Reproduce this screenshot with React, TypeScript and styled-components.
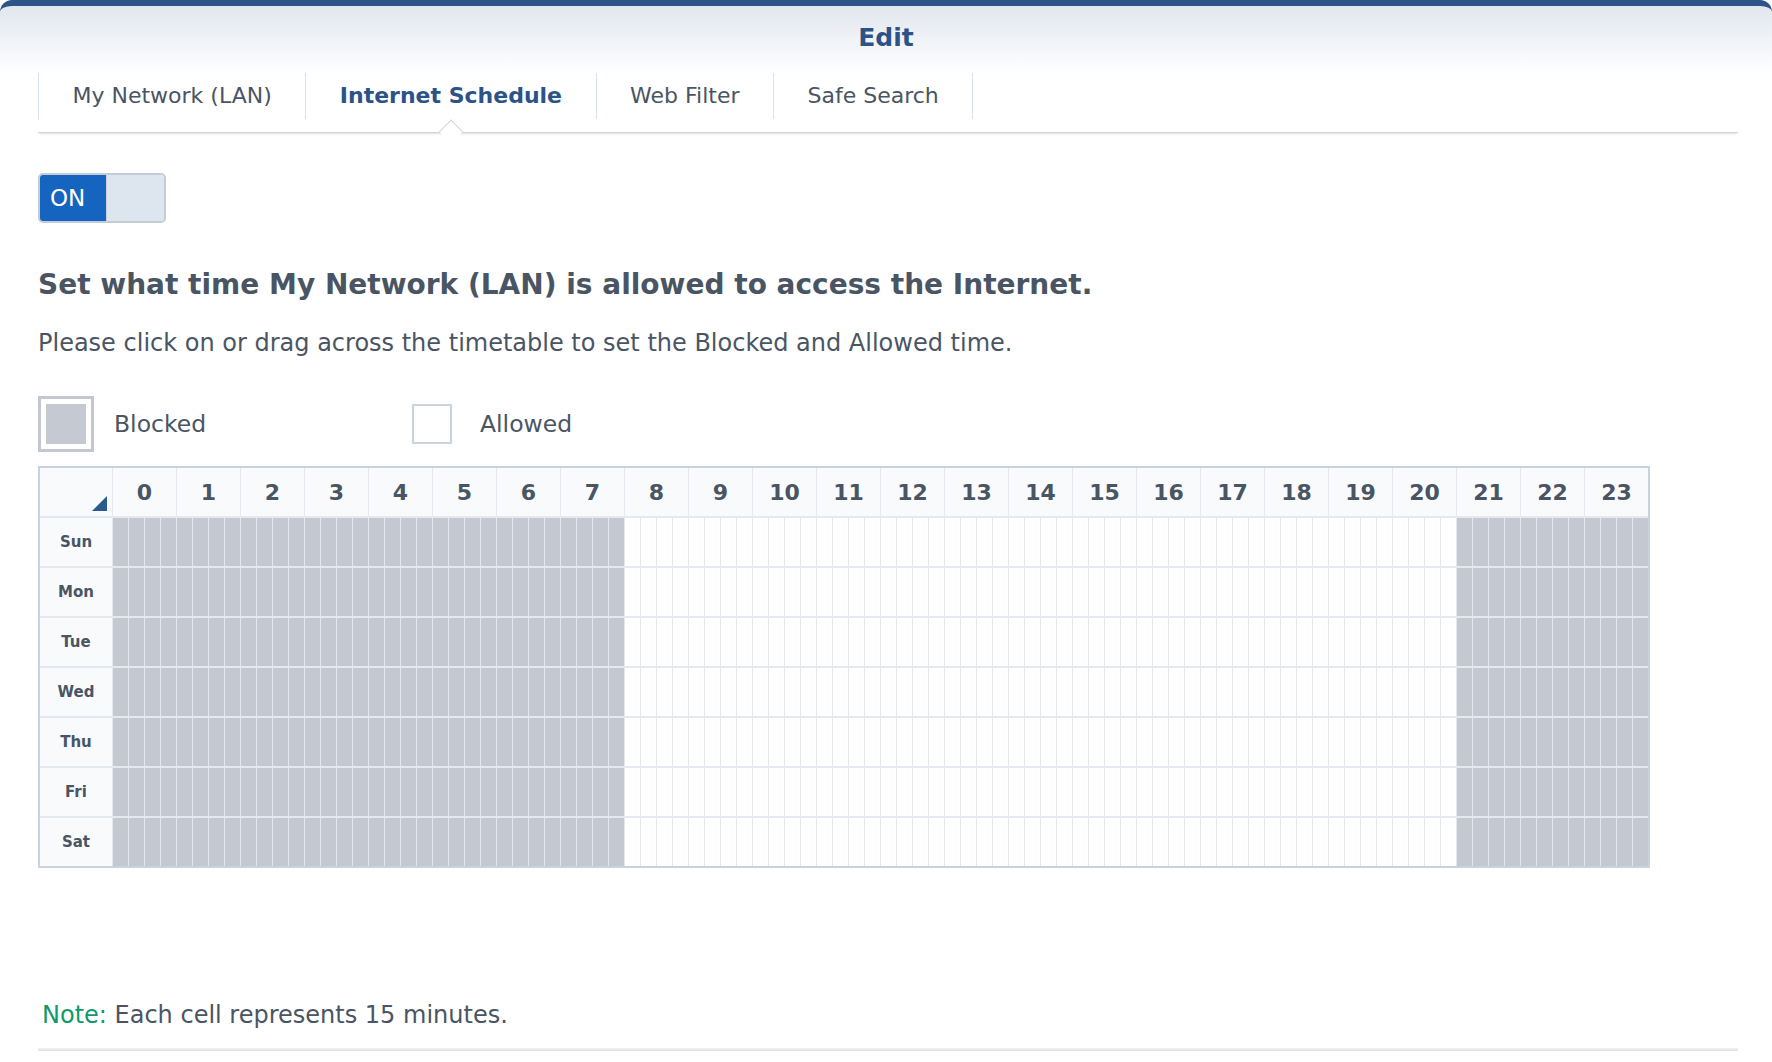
import { FC } from "react";
import styled, { createGlobalStyle } from "styled-components";

const GlobalStyle = createGlobalStyle`
  html, body {
    margin: 0;
    padding: 0;
    background: #ffffff;
  }
  body {
    font-family: "DejaVu Sans", Verdana, sans-serif;
    color: #4a5563;
  }
`;

const Window = styled.div`
  min-height: 1062px;
  box-sizing: border-box;
  border-top: 6px solid #2c5487;
  border-radius: 12px 12px 0 0;
  background: linear-gradient(#e1e7ef 0px, #ffffff 68px);
`;

const Title = styled.div`
  height: 64px;
  line-height: 64px;
  text-align: center;
  font-size: 25px;
  font-weight: 700;
  color: #2b5388;
`;

const TabBar = styled.div`
  margin: 3px 34px 0 38px;
  display: flex;
  padding-bottom: 13px;
  border-bottom: 1px solid #d0d4d9;
  box-shadow: 0 2px 2px -1px rgba(0, 0, 0, 0.12);
`;

const Tab = styled.div<{ $active?: boolean }>`
  position: relative;
  height: 46px;
  line-height: 46px;
  padding: 0 33.5px;
  border-left: 1px solid #d9e1ea;
  font-size: 22px;
  font-weight: ${(p) => (p.$active ? 700 : 400)};
  color: ${(p) => (p.$active ? "#2b5388" : "#4a5563")};
  &:last-child {
    border-right: 1px solid #d9e1ea;
  }
  ${(p) =>
    p.$active &&
    `
    &::after {
      content: "";
      position: absolute;
      left: 50%;
      bottom: -21px;
      width: 16px;
      height: 16px;
      background: #ffffff;
      border-left: 1px solid #d0d4d9;
      border-top: 1px solid #d0d4d9;
      transform: translateX(-50%) rotate(45deg);
    }
  `}
`;

const Content = styled.div`
  margin: 0 34px 0 38px;
`;

const Toggle = styled.div`
  margin-top: 40px;
  display: flex;
  width: 128px;
  height: 50px;
  box-sizing: border-box;
  border: 2px solid #c4ccd6;
  border-radius: 5px;
  overflow: hidden;
`;

const ToggleOn = styled.div`
  width: 66px;
  box-sizing: border-box;
  padding-left: 10px;
  background: #1565c0;
  color: #ffffff;
  font-size: 23px;
  line-height: 46px;
`;

const ToggleKnob = styled.div`
  flex: 1;
  background: #dde5ee;
  border-left: 1px solid #c9d2dc;
`;

const Heading = styled.h2`
  margin: 46px 0 0;
  font-size: 28px;
  line-height: 32px;
  font-weight: 700;
  color: #4a5563;
`;

const Description = styled.p`
  margin: 28px 0 0;
  font-size: 24px;
  line-height: 28px;
`;

const Legend = styled.div`
  margin-top: 39px;
  display: flex;
`;

const LegendItem = styled.div`
  width: 366px;
  display: flex;
  align-items: center;
  gap: 20px;
  font-size: 23.5px;
`;

const SwatchSlot = styled.div`
  width: 56px;
  height: 56px;
  display: flex;
  align-items: center;
  justify-content: center;
`;

const BlockedSwatch = styled.div`
  width: 56px;
  height: 56px;
  box-sizing: border-box;
  border: 3px solid #c3c8d0;
  background: #c4c9d2;
  box-shadow: inset 0 0 0 5px #ffffff;
`;

const AllowedSwatch = styled.div`
  width: 40px;
  height: 40px;
  box-sizing: border-box;
  border: 2px solid #cbd4de;
  background: #ffffff;
`;

const Schedule = styled.div`
  margin-top: 14px;
  width: 1612px;
  box-sizing: border-box;
  border: 2px solid #c9d3dd;
  display: grid;
  grid-template-columns: 72px repeat(96, 15px);
  grid-auto-rows: 48px;
  column-gap: 1px;
  row-gap: 2px;
  background: #e4e9f0;
`;

const Corner = styled.div`
  background: #f8fafc;
  display: flex;
  align-items: flex-end;
  justify-content: flex-end;
  padding: 0 5px 5px 0;
`;

const CornerMark = styled.div`
  width: 0;
  height: 0;
  border-left: 15px solid transparent;
  border-bottom: 15px solid #2b5a8f;
`;

const HourHead = styled.div`
  grid-column: span 4;
  background: #f8fafc;
  display: flex;
  align-items: center;
  justify-content: center;
  font-size: 22px;
  font-weight: 700;
`;

const DayLabel = styled.div`
  background: #f8fafc;
  display: flex;
  align-items: center;
  justify-content: center;
  font-size: 15px;
  font-weight: 700;
`;

const Cell = styled.div<{ $blocked: boolean }>`
  background: ${(p) => (p.$blocked ? "#c4c8d1" : "#ffffff")};
`;

const Note = styled.div`
  margin-top: 133px;
  font-size: 24px;
  line-height: 28px;
  padding-left: 4px;
`;

const NoteLabel = styled.span`
  color: #0e9a6a;
`;

const Rule = styled.div`
  margin-top: 19px;
  height: 3px;
  background: linear-gradient(#f4f4f4, #dfdfdf);
`;

const days = ["Sun", "Mon", "Tue", "Wed", "Thu", "Fri", "Sat"];
const hours = Array.from({ length: 24 }, (_, i) => i);
const quarters = Array.from({ length: 96 }, (_, i) => i);

const isBlocked = (q: number) => {
  const hour = Math.floor(q / 4);
  return hour < 8 || hour >= 21;
};

const App: FC = () => {
  return (
    <>
      <GlobalStyle />
      <Window>
        <Title>Edit</Title>
        <TabBar>
          <Tab>My Network (LAN)</Tab>
          <Tab $active>Internet Schedule</Tab>
          <Tab>Web Filter</Tab>
          <Tab>Safe Search</Tab>
        </TabBar>
        <Content>
          <Toggle>
            <ToggleOn>ON</ToggleOn>
            <ToggleKnob />
          </Toggle>
          <Heading>
            Set what time My Network (LAN) is allowed to access the Internet.
          </Heading>
          <Description>
            Please click on or drag across the timetable to set the Blocked and
            Allowed time.
          </Description>
          <Legend>
            <LegendItem>
              <SwatchSlot>
                <BlockedSwatch />
              </SwatchSlot>
              Blocked
            </LegendItem>
            <LegendItem>
              <SwatchSlot>
                <AllowedSwatch />
              </SwatchSlot>
              Allowed
            </LegendItem>
          </Legend>
          <Schedule>
            <Corner>
              <CornerMark />
            </Corner>
            {hours.map((h) => (
              <HourHead key={h}>{h}</HourHead>
            ))}
            {days.map((day) => [
              <DayLabel key={day}>{day}</DayLabel>,
              ...quarters.map((q) => (
                <Cell key={`${day}-${q}`} $blocked={isBlocked(q)} />
              )),
            ])}
          </Schedule>
          <Note>
            <NoteLabel>Note:</NoteLabel> Each cell represents 15 minutes.
          </Note>
          <Rule />
        </Content>
      </Window>
    </>
  );
};

export default App;
